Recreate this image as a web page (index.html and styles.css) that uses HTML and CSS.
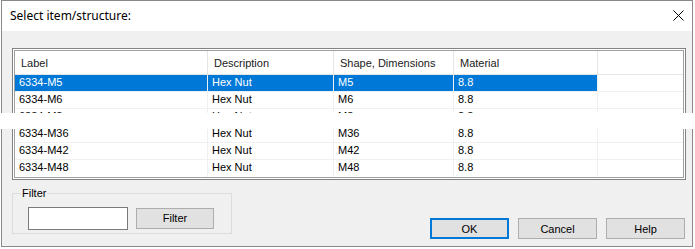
FILE: index.html
```html
<!DOCTYPE html>
<html lang="en">
  <head>
    <meta charset="UTF-8" />
    <title>Select item/structure</title>
    <link rel="stylesheet" href="styles.css">
  </head>
  <body>
    <div class="window">
      <header class="titlebar">
        <span class="title">Select item/structure:</span>
        <svg class="close" width="11" height="11" viewBox="0 0 11 11">
          <path d="M0.5 0.5 L10.5 10.5 M10.5 0.5 L0.5 10.5" stroke="#000" stroke-width="1" fill="none" />
        </svg>
      </header>
      <main class="content">
        <section class="list">
          <div class="list-inner">
            <div class="grid header">
              <div class="cell">Label</div>
              <div class="cell">Description</div>
              <div class="cell">Shape, Dimensions</div>
              <div class="cell">Material</div>
              <div class="cell filler"></div>
            </div>
            <!-- rows -->
            <div class="grid row selected">
              <div class="cell">6334-M5</div>
              <div class="cell">Hex Nut</div>
              <div class="cell">M5</div>
              <div class="cell">8.8</div>
              <div class="cell filler"></div>
            </div>
            <div class="grid row">
              <div class="cell">6334-M6</div>
              <div class="cell">Hex Nut</div>
              <div class="cell">M6</div>
              <div class="cell">8.8</div>
              <div class="cell filler"></div>
            </div>
            <div class="grid row">
              <div class="cell">6334-M8</div>
              <div class="cell">Hex Nut</div>
              <div class="cell">M8</div>
              <div class="cell">8.8</div>
              <div class="cell filler"></div>
            </div>
            <div class="grid row">
              <div class="cell">6334-M36</div>
              <div class="cell">Hex Nut</div>
              <div class="cell">M36</div>
              <div class="cell">8.8</div>
              <div class="cell filler"></div>
            </div>
            <div class="grid row">
              <div class="cell">6334-M42</div>
              <div class="cell">Hex Nut</div>
              <div class="cell">M42</div>
              <div class="cell">8.8</div>
              <div class="cell filler"></div>
            </div>
            <div class="grid row">
              <div class="cell">6334-M48</div>
              <div class="cell">Hex Nut</div>
              <div class="cell">M48</div>
              <div class="cell">8.8</div>
              <div class="cell filler"></div>
            </div>
          </div>
        </section>
        <div class="bottom">
          <div class="filter-group">
            <span class="group-label">Filter</span>
            <input class="filter-input" type="text" />
            <button class="btn filter-button">Filter</button>
          </div>
          <div class="actions">
            <button class="btn btn-default">OK</button>
            <button class="btn">Cancel</button>
            <button class="btn">Help</button>
          </div>
        </div>
      </main>
    </div>
    <div class="cut"></div>
  </body>
</html>
```

FILE: styles.css
```css
body {
  margin: 0;
  background-color: #fff;
  font-family: "Liberation Sans", Arial, sans-serif;
  font-size: 11px;
  color: #000;
  position: relative;
  height: 249px;
  overflow: hidden;
}

.window {
  margin-left: 1px;
  width: 690px;
  height: 245px;
  border: 1px solid #8a8a8a;
  display: flex;
  flex-direction: column;
}

.titlebar {
  height: 30px;
  flex: none;
  background-color: #fff;
  display: flex;
  align-items: center;
  justify-content: space-between;
  padding: 0 8px 0 8px;
}

.title {
  font-family: "Noto Sans", sans-serif;
  font-size: 12px;
  margin-top: -1px;
}

.close {
  display: block;
  margin-top: -1px;
}

.content {
  flex: 1;
  background-color: #f0f0f0;
  padding: 17px 6px 0 10px;
}

.list {
  border: 1px solid #828282;
  padding: 1px;
  background-color: #fff;
}

.list-inner {
  border: 1px solid #a0a0a0;
  background-color: #fff;
}

.grid {
  display: grid;
  grid-template-columns: 193px 126px 120px 144px 1fr;
}

.header {
  height: 23px;
  border-bottom: 1px solid #e5e5e5;
}

.header .cell {
  border-right: 1px solid #e5e5e5;
  padding: 0 0 0 6px;
  line-height: 24px;
  color: #1a1a1a;
}

.row {
  height: 16px;
  border-bottom: 1px solid #f0f0f0;
}

.row:last-child {
  border-bottom: none;
  height: 17px;
}

.row .cell {
  border-right: 1px solid #f0f0f0;
  padding-left: 4px;
  line-height: 14px;
}

.cell {
  white-space: nowrap;
  overflow: hidden;
}

.grid .filler {
  border-right: none;
}

.selected .cell {
  background-color: #0078d7;
  color: #fff;
}

.selected .filler {
  background-color: #fff;
}

.bottom {
  display: flex;
  justify-content: space-between;
  align-items: flex-start;
  margin-top: 13px;
}

.filter-group {
  position: relative;
  width: 203px;
  height: 30px;
  border: 1px solid #dcdcdc;
  padding: 9px 0 0 15px;
  display: flex;
  align-items: center;
  gap: 8px;
}

.group-label {
  position: absolute;
  top: -7px;
  left: 8px;
  padding: 0 1px;
  background-color: #f0f0f0;
  line-height: 12px;
}

.filter-input {
  box-sizing: border-box;
  width: 100px;
  height: 23px;
  margin: 0;
  border: 1px solid #7a7a7a;
  background-color: #fff;
}

.btn {
  box-sizing: border-box;
  width: 79px;
  height: 21px;
  margin: 0;
  padding: 0;
  border: 1px solid #adadad;
  background-color: #e1e1e1;
  font-family: "Liberation Sans", Arial, sans-serif;
  font-size: 11px;
  color: #000;
}

.filter-button {
  width: 78px;
}

.btn-default {
  border: 2px solid #0078d7;
}

.actions {
  display: flex;
  gap: 9px;
  margin-top: 25px;
  margin-right: 1px;
}

.cut {
  position: absolute;
  left: 0;
  right: 0;
  top: 113px;
  height: 16px;
  background-color: #fff;
}
```
